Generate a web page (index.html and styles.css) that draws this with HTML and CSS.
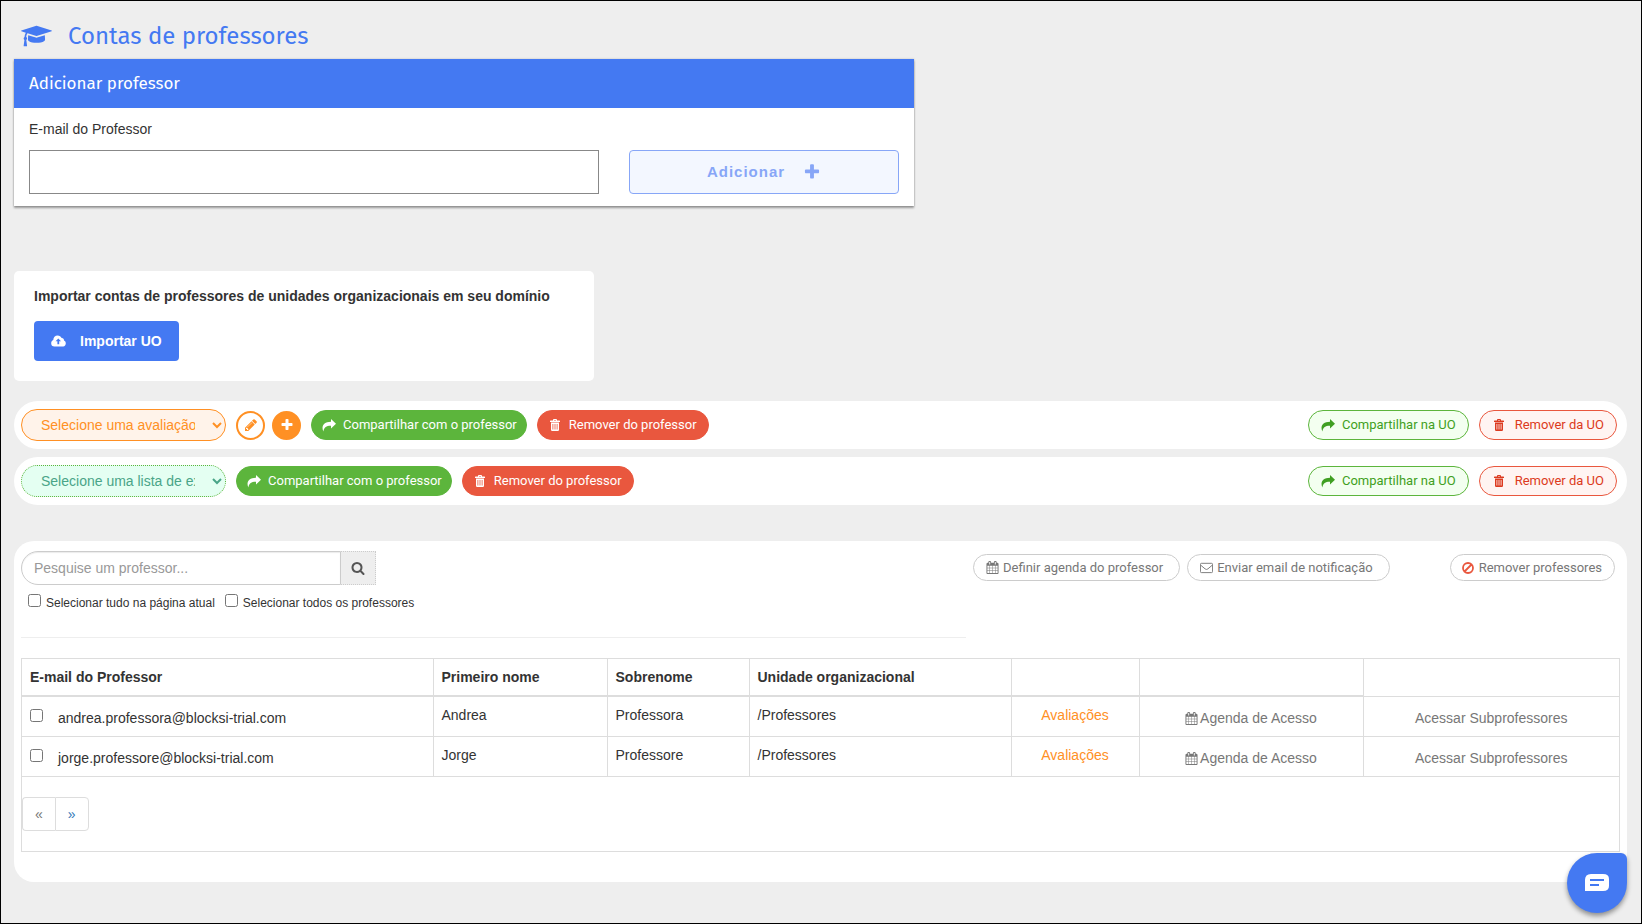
FILE: index.html
```html
<!DOCTYPE html>
<html lang="pt-BR">
<head>
<meta charset="utf-8">
<meta name="viewport" content="width=device-width, initial-scale=1">
<title>Contas de professores</title>
<link rel="stylesheet" href="styles.css">
</head>
<body>
<svg class="sprite" aria-hidden="true">
  <symbol id="cap" viewBox="0 0 2304 1792"><path d="M1774 836l18 316q4 69-82 128t-235 93.500-323 34.500-323-34.500-235-93.500-82-128l18-316 574 181q22 7 48 7t48-7zm530-324q0 23-22 31l-1120 352q-4 1-10 1t-10-1l-652-206q-43 34-71 111.500t-34 178.500q63 36 63 109 0 69-58 107l58 433q2 14-8 25-9 11-24 11h-192q-15 0-24-11-10-11-8-25l58-433q-58-38-58-107 0-73 65-111 11-207 98-330l-333-104q-22-8-22-31t22-31l1120-352q4-1 10-1t10 1l1120 352q22 8 22 31z"/></symbol>
  <symbol id="plus" viewBox="0 0 1792 1792"><path d="M1600 736v192q0 40-28 68t-68 28h-416v416q0 40-28 68t-68 28h-192q-40 0-68-28t-28-68v-416h-416q-40 0-68-28t-28-68v-192q0-40 28-68t68-28h416v-416q0-40 28-68t68-28h192q40 0 68 28t28 68v416h416q40 0 68 28t28 68z"/></symbol>
  <symbol id="pencil" viewBox="0 0 1792 1792"><path d="M491 1536l91-91-235-235-91 91v107h128v128h107zm523-928q0-22-22-22-10 0-17 7l-542 542q-7 7-7 17 0 22 22 22 10 0 17-7l542-542q7-7 7-17zm-54-192l416 416-832 832h-416v-416zm683 96q0 53-37 90l-166 166-416-416 166-165q36-38 90-38 53 0 91 38l235 234q37 39 37 91z"/></symbol>
  <symbol id="share" viewBox="0 0 14 13"><path d="M9 0l5 4.800-5 4.700V6.800C4.500 6.700 2.300 8 1.300 12.500-.9 7 1.500 2.900 9 2.700z"/></symbol>
  <symbol id="trash" viewBox="0 0 10 12"><path fill-rule="evenodd" d="M3 1.500V.9Q3 0 3.900 0h2.200Q7 0 7 .9v.6h2.400q.6 0 .6.600V3H0v-.9q0-.6.600-.6zM4 1.500h2V1H4zM1 3.500h8v7.300q0 1.200-1.200 1.200H2.200Q1 12 1 10.800zM2.500 5v5.500h.8V5zm2.100 0v5.500h.8V5zm2.100 0v5.500h.8V5z"/></symbol>
  <symbol id="cloud" viewBox="0 0 15 12"><path fill-rule="evenodd" d="M12.200 11.500H3.500A3.300 3.300 0 0 1 .2 8.200c0-1.500.8-2.600 2.100-3.100C2.300 2.300 4.100.4 6.600.4c1.900 0 3.300 1 4 2.700 1.500-.1 2.500.9 2.400 2.300 1.100.5 1.800 1.500 1.800 2.900 0 1.900-1.100 3.200-2.600 3.200zM7.300 3.400L4.600 6.300h1.800v2.900h1.800V6.300H10z"/></symbol>
  <symbol id="search" viewBox="0 0 1792 1792"><path d="M1216 832q0-185-131.500-316.500t-316.500-131.500-316.500 131.500-131.500 316.500 131.500 316.500 316.500 131.500 316.500-131.500 131.500-316.500zm512 832q0 52-38 90t-90 38q-54 0-90-38l-343-342q-179 124-399 124-143 0-273.500-55.500t-225-150-150-225-55.500-273.500 55.500-273.500 150-225 225-150 273.500-55.500 273.500 55.500 225 150 150 225 55.500 273.500q0 220-124 399l343 343q37 37 37 90z"/></symbol>
  <symbol id="calendar" viewBox="0 0 1792 1792"><path d="M192 1664h288v-288h-288v288zm352 0h320v-288h-320v288zm-352-352h288v-320h-288v320zm352 0h320v-320h-320v320zm-352-384h288v-288h-288v288zm736 736h320v-288h-320v288zm-384-736h320v-288h-320v288zm768 736h288v-288h-288v288zm-384-352h320v-320h-320v320zm-352-864v-288q0-13-9.500-22.500t-22.500-9.500h-64q-13 0-22.500 9.500t-9.500 22.500v288q0 13 9.500 22.500t22.500 9.500h64q13 0 22.500-9.500t9.500-22.500zm736 864h288v-320h-288v320zm-384-384h320v-288h-320v288zm384 0h288v-288h-288v288zm32-480v-288q0-13-9.500-22.500t-22.500-9.500h-64q-13 0-22.500 9.500t-9.500 22.500v288q0 13 9.500 22.500t22.500 9.500h64q13 0 22.500-9.500t9.500-22.500zm384-64v1280q0 52-38 90t-90 38h-1408q-52 0-90-38t-38-90v-1280q0-52 38-90t90-38h128v-96q0-66 47-113t113-47h64q66 0 113 47t47 113v96h384v-96q0-66 47-113t113-47h64q66 0 113 47t47 113v96h128q52 0 90 38t38 90z"/></symbol>
  <symbol id="mail" viewBox="0 0 14 14"><path fill="none" stroke="currentColor" d="M1.500 2.500h11q1 0 1 1v8q0 1-1 1h-11q-1 0-1-1v-8q0-1 1-1zM.8 4.500l4.700 4q1.500 1.200 3 0l4.700-4"/></symbol>
  <symbol id="ban" viewBox="0 0 14 14"><path fill="none" stroke="currentColor" stroke-width="1.800" d="M7 2a5 5 0 1 1 0 10A5 5 0 0 1 7 2zM3.500 10.500l7-7"/></symbol>
</svg>

<main class="page">
  <h1 class="page-title"><svg class="icon-cap"><use href="#cap"/></svg>Contas de professores</h1>

  <section class="add-card">
    <h2 class="add-head">Adicionar professor</h2>
    <form class="add-form">
      <label class="add-label" for="email">E-mail do Professor</label>
      <input class="add-input" id="email" type="email">
      <button class="add-button" type="button">Adicionar<svg class="icon-plus"><use href="#plus"/></svg></button>
    </form>
  </section>

  <section class="import-card">
    <p class="import-text">Importar contas de professores de unidades organizacionais em seu domínio</p>
    <button class="import-button" type="button"><svg class="icon-cloud"><use href="#cloud"/></svg>Importar UO</button>
  </section>

  <section class="share-bar">
    <select class="picker picker-orange" aria-label="Avaliação"><option>Selecione uma avaliação</option></select>
    <button class="round" type="button" aria-label="Editar"><svg class="icon"><use href="#pencil"/></svg></button>
    <button class="round round-full" type="button" aria-label="Nova"><svg class="icon"><use href="#plus"/></svg></button>
    <button class="pill green" type="button"><svg class="icon-share"><use href="#share"/></svg>Compartilhar com o professor</button>
    <button class="pill red" type="button"><svg class="icon-trash"><use href="#trash"/></svg>Remover do professor</button>
    <span class="spacer"></span>
    <button class="pill green-line" type="button"><svg class="icon-share"><use href="#share"/></svg>Compartilhar na UO</button>
    <button class="pill red-line" type="button"><svg class="icon-trash"><use href="#trash"/></svg>Remover da UO</button>
  </section>

  <section class="share-bar">
    <select class="picker picker-green" aria-label="Lista de exceções"><option>Selecione uma lista de exceções</option></select>
    <button class="pill green" type="button"><svg class="icon-share"><use href="#share"/></svg>Compartilhar com o professor</button>
    <button class="pill red" type="button"><svg class="icon-trash"><use href="#trash"/></svg>Remover do professor</button>
    <span class="spacer"></span>
    <button class="pill green-line" type="button"><svg class="icon-share"><use href="#share"/></svg>Compartilhar na UO</button>
    <button class="pill red-line" type="button"><svg class="icon-trash"><use href="#trash"/></svg>Remover da UO</button>
  </section>

  <section class="list-card">
    <div class="tools">
      <div class="tools-left">
        <div class="search">
          <input class="search-input" type="text" placeholder="Pesquise um professor..." aria-label="Pesquise um professor">
          <button class="search-button" type="button" aria-label="Pesquisar"><svg class="icon"><use href="#search"/></svg></button>
        </div>
        <div class="checks">
          <label class="check"><input class="box" type="checkbox"><span class="check-text">Selecionar tudo na página atual</span></label>
          <label class="check"><input class="box" type="checkbox"><span class="check-text">Selecionar todos os professores</span></label>
        </div>
      </div>
      <div class="tools-right">
        <button class="action" type="button"><svg class="icon-small"><use href="#calendar"/></svg>Definir agenda do professor</button>
        <button class="action" type="button"><svg class="icon-small"><use href="#mail"/></svg>Enviar email de notificação</button>
        <button class="action action-remove" type="button"><svg class="icon icon-ban"><use href="#ban"/></svg>Remover professores</button>
      </div>
    </div>

    <div class="table-frame">
      <table class="teachers">
        <colgroup><col class="c-mail"><col class="c-first"><col class="c-last"><col class="c-unit"><col class="c-tests"><col class="c-agenda"><col class="c-sub"></colgroup>
        <thead>
          <tr><th>E-mail do Professor</th><th>Primeiro nome</th><th>Sobrenome</th><th>Unidade organizacional</th><th></th><th></th><td class="head-end"></td></tr>
        </thead>
        <tbody>
          <tr>
            <td><label class="mail"><input class="box" type="checkbox"><span class="mail-text">andrea.professora@blocksi-trial.com</span></label></td>
            <td>Andrea</td><td>Professora</td><td>/Professores</td>
            <td class="mid"><a class="tests" href="#">Avaliações</a></td>
            <td class="mid"><button class="row-button" type="button"><svg class="icon-small"><use href="#calendar"/></svg>Agenda de Acesso</button></td>
            <td class="mid"><button class="row-button" type="button">Acessar Subprofessores</button></td>
          </tr>
          <tr>
            <td><label class="mail"><input class="box" type="checkbox"><span class="mail-text">jorge.professore@blocksi-trial.com</span></label></td>
            <td>Jorge</td><td>Professore</td><td>/Professores</td>
            <td class="mid"><a class="tests" href="#">Avaliações</a></td>
            <td class="mid"><button class="row-button" type="button"><svg class="icon-small"><use href="#calendar"/></svg>Agenda de Acesso</button></td>
            <td class="mid"><button class="row-button" type="button">Acessar Subprofessores</button></td>
          </tr>
        </tbody>
      </table>
      <nav class="pages" aria-label="Paginação">
        <a class="page-link page-off" href="#">«</a><a class="page-link" href="#">»</a>
      </nav>
    </div>
  </section>
</main>

<button class="chat" type="button" aria-label="Chat"><svg class="icon-chat" viewBox="0 0 24 18"><path fill="#fff" d="M6 0h12q6 0 6 5v7q0 5-6 5H0V6q0-6 6-6z"/><path stroke="#4479f2" stroke-width="2" d="M5 6h14M5 11h9"/></svg></button>
</body>
</html>
```

FILE: styles.css
```css
* { box-sizing: border-box; }

body {
  margin: 0;
  min-height: 100vh;
  border: 1px solid #000;
  background: #eee;
  color: #333;
  font: 14px/20px "Liberation Sans", Arial, sans-serif;
}

button, input, select { font: inherit; color: inherit; margin: 0; }
button { cursor: pointer; }
svg { fill: currentColor; flex: none; }
a { text-decoration: none; }

.sprite { position: absolute; width: 0; height: 0; }
.icon { width: 14px; height: 14px; }
.icon-small { width: 13px; height: 13px; }
.page { padding: 10px 14px 40px 13px; }

.page-title {
  display: flex;
  align-items: center;
  gap: 16px;
  height: 48px;
  margin: 0;
  padding: 2px 0 0 7px;
  color: #4479f2;
  font: 400 24px/32px "Fira Sans", "Noto Sans", sans-serif;
}
.icon-cap { width: 31px; height: 24px; }

.add-card {
  max-width: 900px;
  background: #fff;
  box-shadow: 0 2px 2px rgba(0, 0, 0, .35), 0 0 2px rgba(0, 0, 0, .2);
}
.add-head {
  margin: 0;
  padding: 13px 15px 12px;
  background: #4479f2;
  color: #fff;
  font: 400 17px/24px "Fira Sans", "Noto Sans", sans-serif;
}
.add-form {
  display: grid;
  grid-template-columns: 570fr 270fr;
  gap: 11px 30px;
  padding: 11px 15px 12px;
}
.add-label { grid-column: 1 / -1; }
.add-input { width: 100%; height: 44px; padding: 0 12px; border: 1px solid #888; background: #fff; }
.add-button {
  display: flex;
  align-items: center;
  justify-content: center;
  gap: 18px;
  height: 44px;
  border: 1px solid #87a6f7;
  border-radius: 4px;
  background: #f3f7ff;
  color: #87a6f7;
  font-size: 15px;
  font-weight: 700;
  letter-spacing: 1px;
}
.icon-plus { width: 18px; height: 18px; }

.import-card {
  max-width: 580px;
  margin-top: 65px;
  padding: 15px 20px 20px;
  border-radius: 5px;
  background: #fff;
}
.import-text { margin: 0 0 15px; font-weight: 700; }
.import-button {
  display: flex;
  align-items: center;
  gap: 14px;
  height: 40px;
  padding: 0 17px;
  border: 0;
  border-radius: 4px;
  background: #4479f2;
  color: #fff;
  font-weight: 700;
}
.icon-cloud { width: 15px; height: 12px; }

.share-bar {
  display: flex;
  align-items: center;
  gap: 10px;
  min-height: 48px;
  margin-top: 8px;
  padding: 8px 10px 8px 7px;
  border-radius: 24px;
  background: #fff;
}
.import-card + .share-bar { margin-top: 20px; }
.spacer { flex: 1; }

.picker {
  width: 205px;
  height: 32px;
  padding: 0 14px 0 15px;
  border-radius: 16px;
}
.picker-orange { border: 1px solid #ff9024; background: #fff3ea; color: #ff9024; }
.picker-green { border: 1px dotted #5cb53c; background: #e4fff2; color: #4aa588; }

.round {
  display: flex;
  align-items: center;
  justify-content: center;
  width: 29px;
  height: 29px;
  padding: 0;
  border: 2px solid #ff9024;
  border-radius: 50%;
  background: #fff;
  color: #ff9024;
}
.round + .round { margin-left: -3px; }
.round-full { background: #ff9024; color: #fff; }

.pill {
  display: flex;
  align-items: center;
  gap: 7px;
  height: 30px;
  border: 1px solid;
  border-radius: 15px;
  font: 400 13px/20px Roboto, sans-serif;
  white-space: nowrap;
}
.green { padding: 0 9px 0 10px; border-color: #5cb53c; background: #5cb53c; color: #fff; }
.red { gap: 9px; padding: 0 11px 0 12px; border-color: #e9573e; background: #e9573e; color: #fff; }
.green-line { padding: 0 12px; border-color: #5cb53c; background: #f3fff0; color: #3f9f22; }
.red-line { gap: 11px; padding: 0 12px 0 14px; border-color: #e9573e; background: #fff4f2; color: #dc3a20; }
.icon-share { width: 14px; height: 13px; }
.icon-trash { width: 10px; height: 12px; }

.list-card {
  margin-top: 36px;
  padding: 10px 7px 30px;
  border-radius: 20px;
  background: #fff;
}
.tools { display: flex; justify-content: space-between; gap: 7px; }
.tools-left { flex: 0 1 946px; border-bottom: 1px solid #eee; padding-bottom: 25px; }
.search { display: flex; }
.search-input {
  width: 320px;
  height: 34px;
  padding: 0 12px;
  border: 1px solid #ccc;
  border-radius: 17px 0 0 17px;
  box-shadow: inset 0 1px 1px rgba(0, 0, 0, .08);
}
.search-input::placeholder { color: #999; opacity: 1; }
.search-button {
  display: flex;
  align-items: center;
  justify-content: center;
  width: 35px;
  height: 34px;
  padding: 0;
  border: 1px dotted #ccc;
  border-left: 0;
  background: #eee;
  color: #555;
}
.checks { display: flex; gap: 10px; padding: 9px 7px 0; font-size: 12px; line-height: 17px; }
.check { display: flex; align-items: flex-start; gap: 5px; }
.check-text { padding-top: 1px; }
.box { width: 13px; height: 13px; flex: none; }

.tools-right { display: flex; align-items: flex-start; gap: 7px; padding: 3px 5px 0 0; }
.action {
  display: flex;
  align-items: center;
  gap: 4px;
  height: 27px;
  padding: 0 16px 0 12px;
  border: 1px solid #ccc;
  border-radius: 14px;
  background: #fff;
  color: #777;
  font: 400 13px/20px Roboto, sans-serif;
  white-space: nowrap;
}
.action-remove { margin-left: 53px; padding: 0 12px 0 10px; }
.icon-ban { color: #e9573e; }

.table-frame { margin-top: 20px; border: 1px solid #ddd; }
.teachers { width: 100%; border-collapse: collapse; table-layout: fixed; }
.teachers th, .teachers td { border: 1px solid #ddd; padding: 8px; text-align: left; vertical-align: top; }
.teachers th { height: 37px; border-bottom-width: 2px; }
.teachers td { height: 40px; }
.teachers tr > :first-child { border-left: 0; padding-left: 8px; }
.teachers tr > :last-child { border-right: 0; }
.teachers thead tr > * { border-top: 0; }
.teachers .head-end { height: 37px; }
.teachers .mid { text-align: center; }
.c-mail { width: 411px; }
.c-first { width: 174px; }
.c-last { width: 142px; }
.c-unit { width: 262px; }
.c-tests { width: 128px; }
.c-agenda { width: 224px; }

.mail { display: flex; align-items: flex-start; gap: 15px; padding-top: 4px; }
.mail-text { line-height: 18px; }
.tests { color: #ff9024; }
.row-button {
  display: inline-flex;
  align-items: center;
  gap: 2px;
  padding: 3px 0 0;
  border: 0;
  background: none;
  color: #777;
  line-height: 20px;
  vertical-align: top;
}

.pages { display: flex; padding: 20px 0; }
.page-link {
  height: 34px;
  padding: 6px 12px;
  border: 1px solid #ddd;
  border-radius: 0 4px 4px 0;
  color: #337ab7;
}
.page-off { border-right: 0; border-radius: 4px 0 0 4px; color: #777; }

.chat {
  position: fixed;
  right: 15px;
  bottom: 11px;
  display: flex;
  align-items: center;
  justify-content: center;
  width: 60px;
  height: 60px;
  padding: 0;
  border: 0;
  border-radius: 30px 6px 30px 30px;
  background: #4479f2;
  box-shadow: 0 3px 5px rgba(0, 0, 0, .4);
}
.icon-chat { width: 24px; height: 18px; }
```
